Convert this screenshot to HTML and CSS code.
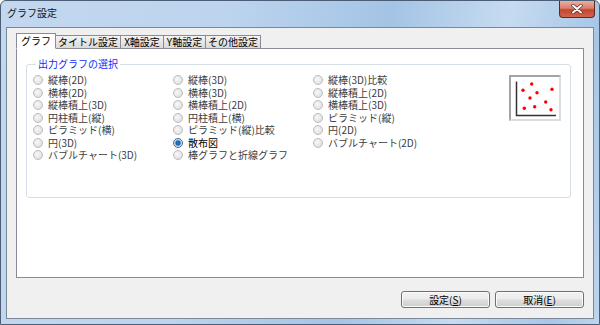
FILE: index.html
```html
<!DOCTYPE html>
<html lang="ja">
<head>
    <meta charset="UTF-8">
    <title>グラフ設定</title>
    <link rel="stylesheet" href="styles.css">
</head>
<body>
    <div class="window">
        <div class="titlebar">
            <span class="title">グラフ設定</span>
            <button class="close" type="button">
                <svg width="14" height="10" viewBox="0 0 14 10">
                    <path d="M3 1.5 L11 8.5 M11 1.5 L3 8.5" stroke="#5a2a22" stroke-width="3.4" stroke-linecap="round"/>
                    <path d="M3 1.5 L11 8.5 M11 1.5 L3 8.5" stroke="#fff" stroke-width="2" stroke-linecap="round"/>
                </svg>
            </button>
        </div>

        <div class="client">
            <div class="tabs">
                <div class="tab active tab-graph">グラフ</div>
                <div class="tab tab-title">タイトル設定</div>
                <div class="tab tab-x">X軸設定</div>
                <div class="tab tab-y">Y軸設定</div>
                <div class="tab tab-other">その他設定</div>
            </div>

            <div class="panel">
                <fieldset class="group">
                    <legend>出力グラフの選択</legend>
                    <div class="group-body">
                        <div class="choices">
                            <label class="choice"><span class="radio"></span>縦棒(2D)</label>
                            <label class="choice"><span class="radio"></span>横棒(2D)</label>
                            <label class="choice"><span class="radio"></span>縦棒積上(3D)</label>
                            <label class="choice"><span class="radio"></span>円柱積上(縦)</label>
                            <label class="choice"><span class="radio"></span>ピラミッド(横)</label>
                            <label class="choice"><span class="radio"></span>円(3D)</label>
                            <label class="choice"><span class="radio"></span>バブルチャート(3D)</label>

                            <label class="choice"><span class="radio"></span>縦棒(3D)</label>
                            <label class="choice"><span class="radio"></span>横棒(3D)</label>
                            <label class="choice"><span class="radio"></span>横棒積上(2D)</label>
                            <label class="choice"><span class="radio"></span>円柱積上(横)</label>
                            <label class="choice"><span class="radio"></span>ピラミッド(縦)比較</label>
                            <label class="choice checked"><span class="radio"></span>散布図</label>
                            <label class="choice"><span class="radio"></span>棒グラフと折線グラフ</label>

                            <label class="choice"><span class="radio"></span>縦棒(3D)比較</label>
                            <label class="choice"><span class="radio"></span>縦棒積上(2D)</label>
                            <label class="choice"><span class="radio"></span>横棒積上(3D)</label>
                            <label class="choice"><span class="radio"></span>ピラミッド(縦)</label>
                            <label class="choice"><span class="radio"></span>円(2D)</label>
                            <label class="choice"><span class="radio"></span>バブルチャート(2D)</label>
                        </div>

                        <div class="preview">
                            <svg width="48" height="41" viewBox="0 0 48 41">
                                <path d="M5.5 4.5 V38.5 H45" stroke="#333" stroke-width="1.5" fill="none"/>
                                <g fill="#ff0000">
                                    <circle cx="20.7" cy="7" r="1.7"/>
                                    <circle cx="12" cy="13.3" r="1.7"/>
                                    <circle cx="26" cy="15.7" r="1.7"/>
                                    <circle cx="41" cy="12.3" r="1.7"/>
                                    <circle cx="19" cy="21" r="1.7"/>
                                    <circle cx="34.7" cy="25" r="1.7"/>
                                    <circle cx="13.3" cy="31.3" r="1.7"/>
                                    <circle cx="23.7" cy="29.7" r="1.7"/>
                                    <circle cx="40" cy="32.7" r="1.7"/>
                                </g>
                            </svg>
                        </div>
                    </div>
                </fieldset>
            </div>

            <div class="actions">
                <button class="button" type="button">設定(<u>S</u>)</button>
                <button class="button" type="button">取消(<u>E</u>)</button>
            </div>
        </div>
    </div>
</body>
</html>
```

FILE: styles.css
```css
* {
    margin: 0;
    padding: 0;
    box-sizing: border-box;
}

body {
    font-family: "Noto Sans CJK JP", "Liberation Sans", sans-serif;
    font-size: 10px;
    color: #000;
    background: #fff;
    overflow: hidden;
}

.window {
    width: 600px;
    height: 325px;
    display: flex;
    flex-direction: column;
    border: 1px solid #4b5e76;
    border-radius: 6px 6px 0 0;
    background: linear-gradient(100deg, #c3d8ef 0%, #bcd4ee 35%, #a4c4e5 60%, #c6dbf0 78%, #a7c6e7 92%, #bdd5ee 100%);
}

.titlebar {
    height: 26px;
    display: flex;
    justify-content: space-between;
    align-items: flex-start;
    padding: 0 4px 0 6px;
}

.title {
    margin-top: 4px;
    font-size: 10px;
    color: #111;
}

.close {
    width: 36px;
    height: 17px;
    display: flex;
    align-items: center;
    justify-content: center;
    border: 1px solid #5e2b23;
    border-top: none;
    border-radius: 0 0 4px 4px;
    background: linear-gradient(#eab0a3, #d9806d 45%, #c5452e 55%, #d0664d);
}

.client {
    flex: 1;
    display: flex;
    flex-direction: column;
    margin: 0 5px 5px;
    padding: 5px 9px 10px;
    border: 1px solid #7a8898;
    background: #f0f0f0;
}

/* onglets */
.tabs {
    display: flex;
    align-items: flex-end;
    height: 16px;
    margin-bottom: -1px;
}

.tab {
    height: 14px;
    line-height: 12px;
    text-align: center;
    border: 1px solid #898c95;
    margin-right: -1px;
    background: linear-gradient(#f4f4f4, #e6e6e6 50%, #d9d9d9);
    white-space: nowrap;
}

.tab.active {
    height: 16px;
    line-height: 14px;
    background: #fff;
    border-bottom-color: #fff;
    position: relative;
    z-index: 1;
}

.tab-graph { width: 40px; }
.tab-title { width: 66px; }
.tab-x { width: 44px; }
.tab-y { width: 43px; }
.tab-other { width: 56px; }

.panel {
    flex: 1;
    background: #fff;
    border: 1px solid #898c95;
    padding: 9px 12px 0 9px;
}

.group {
    border: 1px solid #d5dfe5;
    border-radius: 3px;
    padding: 4px 9px 35px 6px;
}

.group legend {
    margin-left: 3px;
    padding: 0 2px;
    color: #0a2cff;
    font-size: 10px;
    line-height: 12px;
}

.group-body {
    display: flex;
    align-items: flex-start;
}

.choices {
    display: grid;
    grid-auto-flow: column;
    grid-template-rows: repeat(7, 12.5px);
    grid-template-columns: repeat(3, 140px);
}

.choice {
    display: flex;
    align-items: center;
    gap: 5px;
    color: #3c3c3c;
    white-space: nowrap;
    line-height: 12px;
}

.choice.checked {
    color: #000;
}

.radio {
    width: 10px;
    height: 10px;
    border-radius: 50%;
    border: 1px solid #bcbcbc;
    background: radial-gradient(circle at 40% 40%, #f8f8f8, #e2e2e2 70%, #d4d4d4);
}

.checked .radio {
    border-color: #4c6c8c;
    background: radial-gradient(circle, #2a7ad0 0, #1b5ea8 2px, #8fc3ec 3px, #e6eef6 4px);
}

.preview {
    margin-left: auto;
    margin-top: 1px;
    width: 52px;
    height: 46px;
    border: 2px solid;
    border-color: #a4a4a4 #dcdcdc #dcdcdc #a4a4a4;
    background: #fff;
}

.preview svg {
    display: block;
}

/* boutons */
.actions {
    display: flex;
    justify-content: flex-end;
    gap: 5px;
    margin-top: 13px;
}

.button {
    width: 89px;
    height: 17px;
    font-family: inherit;
    font-size: 10px;
    color: #000;
    border: 1px solid #707070;
    border-radius: 3px;
    background: linear-gradient(#f2f2f2, #ebebeb 48%, #dddddd 52%, #cfcfcf);
    box-shadow: inset 0 0 0 1px #fbfbfb;
}
```
